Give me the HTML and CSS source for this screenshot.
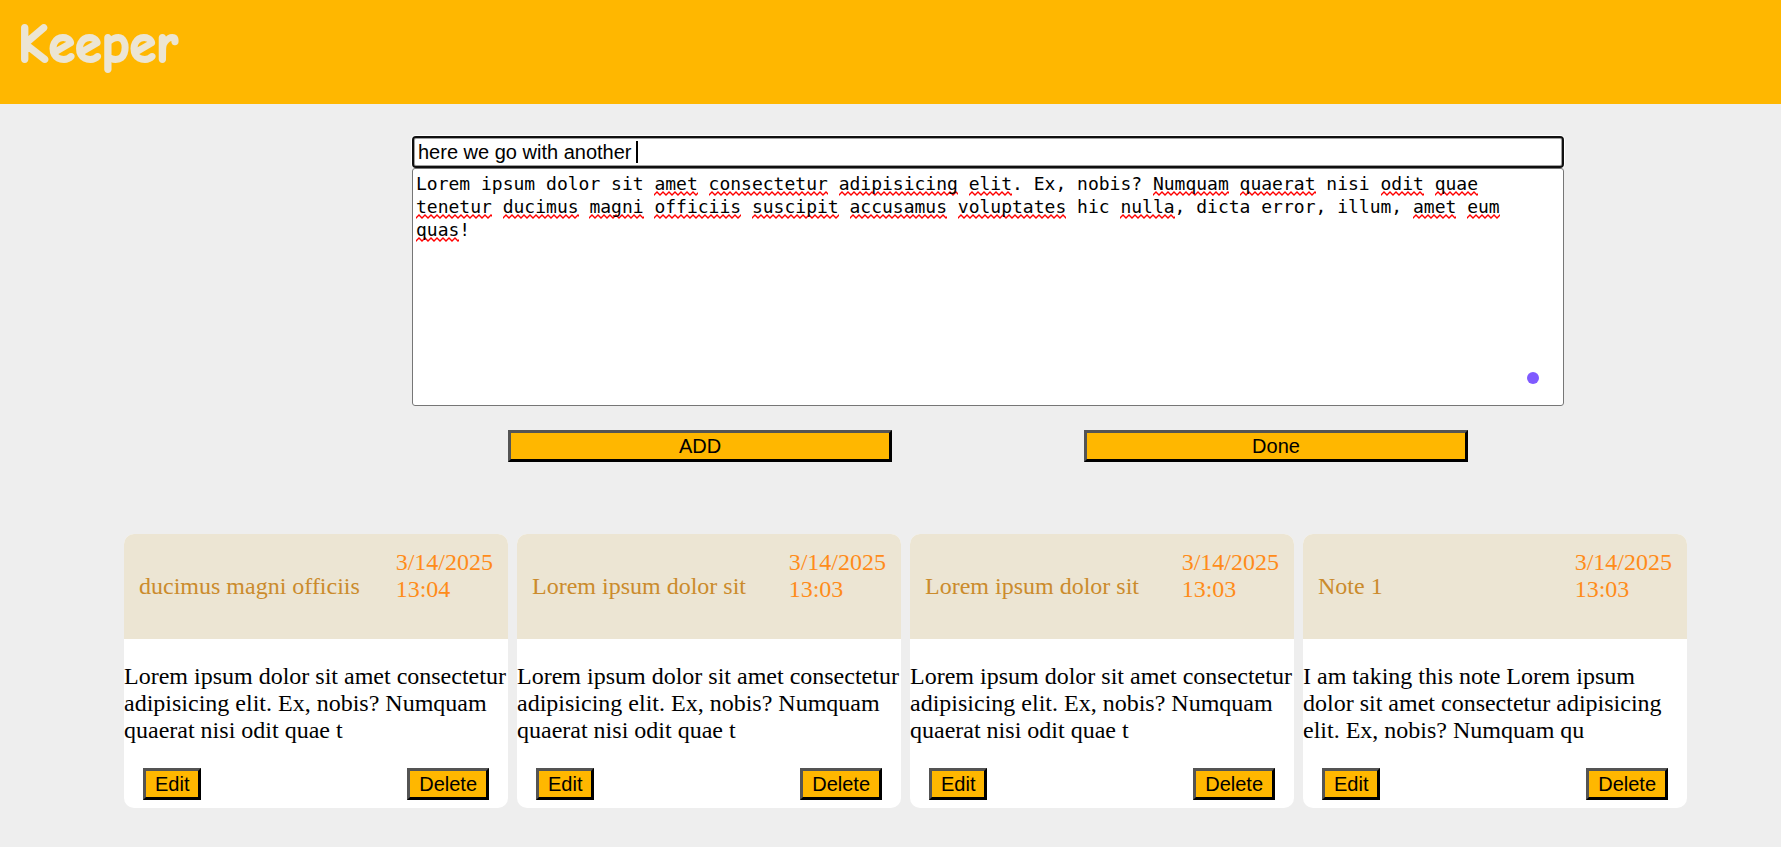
FILE: index.html
```html
<!DOCTYPE html>
<html lang="en">
<head>
<meta charset="utf-8">
<meta name="viewport" content="width=device-width, initial-scale=1">
<title>Keeper</title>
<link rel="stylesheet" href="styles.css">
</head>
<body>
<header class="site-header">
  <h1 class="logo">Keeper</h1>
</header>
<main>
  <form class="editor">
    <div class="title-field">
      <input class="title-input" type="text" aria-label="Note title" value="here we go with another ">
      <span class="caret" aria-hidden="true"></span>
    </div>
    <div class="body-field">
      <div class="spelling" aria-hidden="true">Lorem ipsum dolor sit <u>amet</u> <u>consectetur</u> <u>adipisicing</u> <u>elit</u>. Ex, nobis? <u>Numquam</u> <u>quaerat</u> nisi <u>odit</u> <u>quae</u> <u>tenetur</u> <u>ducimus</u> <u>magni</u> <u>officiis</u> <u>suscipit</u> <u>accusamus</u> <u>voluptates</u> hic <u>nulla</u>, dicta error, illum, <u>amet</u> <u>eum</u> <u>quas</u>!</div>
      <textarea class="body-input" aria-label="Note text" spellcheck="false">Lorem ipsum dolor sit amet consectetur adipisicing elit. Ex, nobis? Numquam quaerat nisi odit quae tenetur ducimus magni officiis suscipit accusamus voluptates hic nulla, dicta error, illum, amet eum quas!</textarea>
      <span class="dot" aria-hidden="true"></span>
    </div>
    <div class="editor-actions">
      <button class="btn btn-wide" type="button">ADD</button>
      <button class="btn btn-wide" type="button">Done</button>
    </div>
  </form>
  <section class="notes">
    <article class="note">
      <div class="note-head">
        <p class="note-title">ducimus magni officiis</p>
        <div class="note-date">3/14/2025<br>13:04</div>
      </div>
      <p class="note-text">Lorem ipsum dolor sit amet consectetur adipisicing elit. Ex, nobis? Numquam quaerat nisi odit quae t</p>
      <div class="note-actions">
        <button class="btn" type="button">Edit</button>
        <button class="btn" type="button">Delete</button>
      </div>
    </article>
    <article class="note">
      <div class="note-head">
        <p class="note-title">Lorem ipsum dolor sit</p>
        <div class="note-date">3/14/2025<br>13:03</div>
      </div>
      <p class="note-text">Lorem ipsum dolor sit amet consectetur adipisicing elit. Ex, nobis? Numquam quaerat nisi odit quae t</p>
      <div class="note-actions">
        <button class="btn" type="button">Edit</button>
        <button class="btn" type="button">Delete</button>
      </div>
    </article>
    <article class="note">
      <div class="note-head">
        <p class="note-title">Lorem ipsum dolor sit</p>
        <div class="note-date">3/14/2025<br>13:03</div>
      </div>
      <p class="note-text">Lorem ipsum dolor sit amet consectetur adipisicing elit. Ex, nobis? Numquam quaerat nisi odit quae t</p>
      <div class="note-actions">
        <button class="btn" type="button">Edit</button>
        <button class="btn" type="button">Delete</button>
      </div>
    </article>
    <article class="note">
      <div class="note-head">
        <p class="note-title">Note 1</p>
        <div class="note-date">3/14/2025<br>13:03</div>
      </div>
      <p class="note-text">I am taking this note Lorem ipsum dolor sit amet consectetur adipisicing elit. Ex, nobis? Numquam qu</p>
      <div class="note-actions">
        <button class="btn" type="button">Edit</button>
        <button class="btn" type="button">Delete</button>
      </div>
    </article>
  </section>
</main>
</body>
</html>
```

FILE: styles.css
```css
* {
  box-sizing: border-box;
}

body {
  margin: 0;
  background: #eeeeee;
  color: #000;
  font-family: "Liberation Serif", "Times New Roman", serif;
  font-size: 24px;
  line-height: 27px;
}

.site-header {
  padding: 15px 18px 29px;
  background: #ffb700;
}

.logo {
  margin: 0;
  color: #ece5d3;
  font-family: "Comic Sans MS", "Comic Neue", Lato, sans-serif;
  font-size: 54px;
  font-weight: 700;
  line-height: 60px;
  -webkit-text-stroke: 2px #ece5d3;
}

.editor {
  margin: 32px 217px 0 412px;
}

.title-field,
.body-field {
  position: relative;
}

.title-input {
  display: block;
  width: 100%;
  height: 32px;
  padding: 0 4px;
  border: 2px solid #101010;
  border-radius: 4px;
  outline: none;
  background: #fff;
  box-shadow: 0 0 0 1px #fff, inset 0 0 0 1px #a0a0a0;
  color: #000;
  font-family: "Liberation Sans", Arial, sans-serif;
  font-size: 20px;
}

.caret {
  position: absolute;
  top: 5px;
  left: 224px;
  width: 2px;
  height: 22px;
  background: #000;
}

.body-field {
  height: 238px;
  border-radius: 3px;
  background: #fff;
}

.spelling,
.body-input {
  position: absolute;
  inset: 0;
  width: 100%;
  height: 100%;
  margin: 0;
  padding: 3px;
  border: 1px solid #767676;
  border-radius: 3px;
  font-family: Consolas, "DejaVu Sans Mono", monospace;
  font-size: 18px;
  line-height: 23px;
}

.spelling {
  border-color: transparent;
  color: transparent;
}

.spelling u {
  padding-bottom: 2px;
  background: url("data:image/svg+xml,%3Csvg xmlns='http://www.w3.org/2000/svg' width='6' height='5'%3E%3Cpath d='M-1.5 2.5L0 4L3 1L6 4L7.5 2.5' fill='none' stroke='red' stroke-width='1.4'/%3E%3C/svg%3E") left bottom repeat-x;
  text-decoration: none;
}

.body-input {
  background: transparent;
  color: #000;
  resize: none;
}

.dot {
  position: absolute;
  right: 25px;
  bottom: 22px;
  width: 12px;
  height: 12px;
  border-radius: 50%;
  background: #7f5aff;
}

.editor-actions {
  display: flex;
  justify-content: space-around;
  margin-top: 24px;
}

.btn {
  padding: 1px 9px;
  border: 3px outset #000;
  border-radius: 0;
  background: #ffb700;
  color: #000;
  font-family: "Liberation Sans", Arial, sans-serif;
  font-size: 20px;
  line-height: 24px;
}

.btn-wide {
  flex: 0 1 384px;
}

.notes {
  display: grid;
  grid-template-columns: repeat(auto-fill, minmax(340px, 1fr));
  gap: 9px;
  margin: 72px 94px 39px 124px;
}

.note {
  overflow: hidden;
  border-radius: 10px;
  background: #fff;
}

.note-head {
  display: flex;
  justify-content: space-between;
  padding: 15px;
  background: #ece5d3;
}

.note-title {
  margin: 24px 0;
  color: #cb8b2c;
}

.note-date {
  color: #ff8c1a;
}

.note-text {
  margin: 24px 0;
}

.note-actions {
  display: flex;
  justify-content: space-between;
  padding: 0 19px 8px;
}
```
